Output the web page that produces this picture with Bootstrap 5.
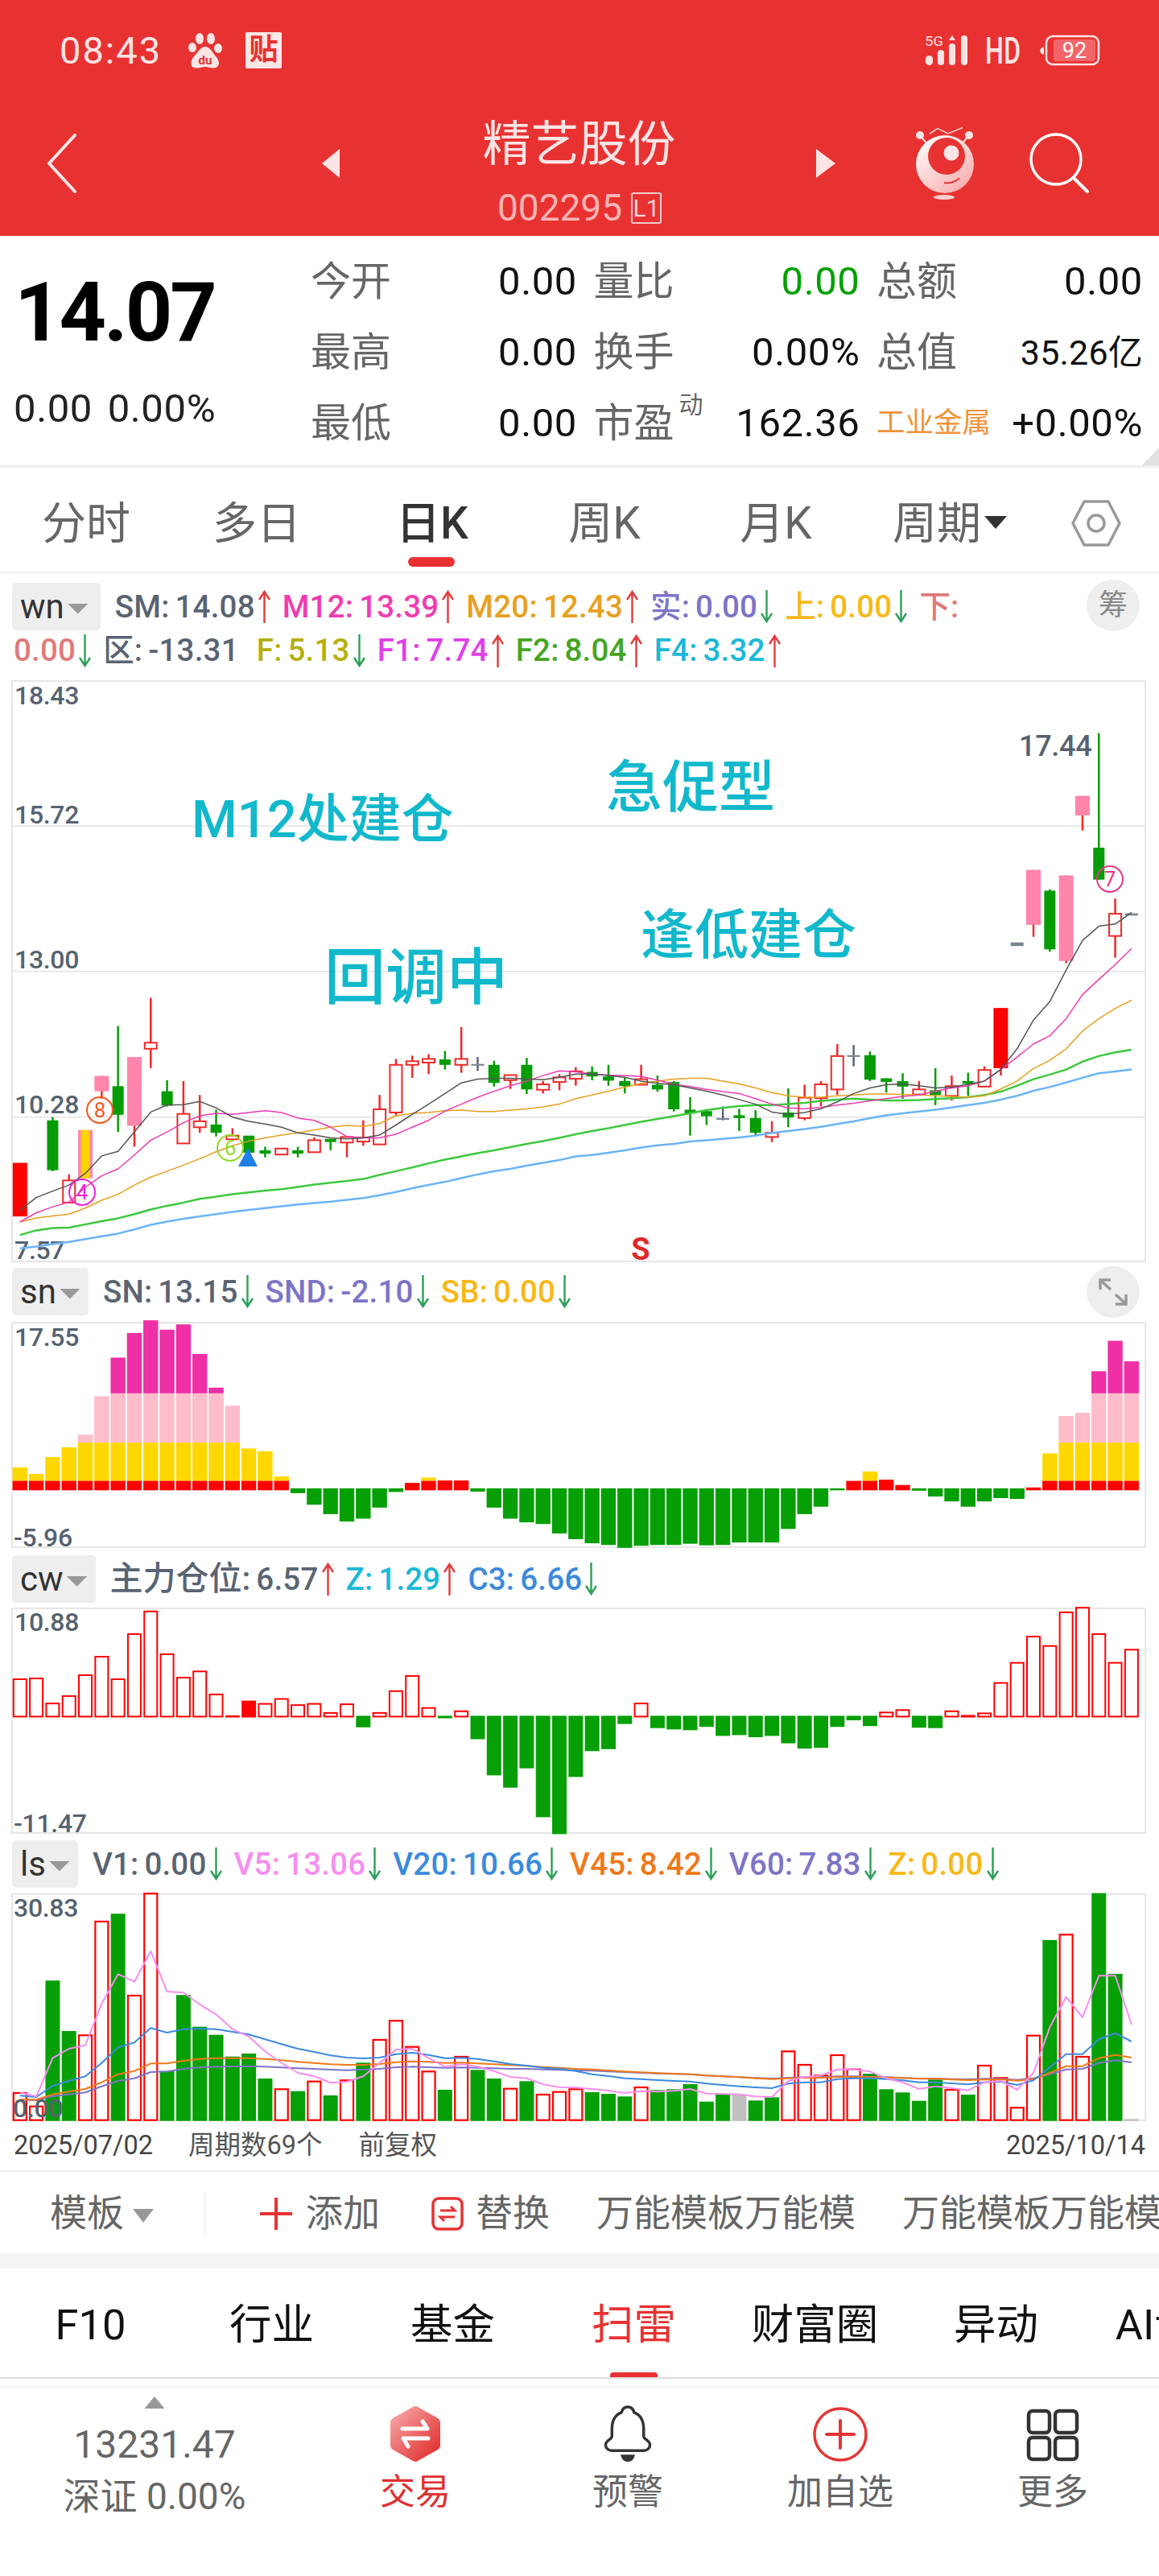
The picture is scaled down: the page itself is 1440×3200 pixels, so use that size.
<!DOCTYPE html>
<html lang="zh-CN">
<head>
    <meta charset="UTF-8">
    <meta name="viewport" content="width=device-width, initial-scale=1.0">
    <title>精艺股份 002295</title>
    <link href="https://cdn.jsdelivr.net/npm/bootstrap@5.3.0/dist/css/bootstrap.min.css" rel="stylesheet">
    <style>
        body { width: 1440px; height: 3200px; overflow: hidden; background: #fff; color: #333;
            font-family: Roboto, "Noto Sans CJK SC", sans-serif; }
        svg { display: block; overflow: visible; }

        /* red header */
        .top-bar { height: 293px; background: #e83232; color: #fde4e4; }
        .status-line { height: 124px; padding: 0 73px 0 74px; }
        .status-time { font-size: 47px; letter-spacing: 2px; margin-right: 32px; line-height: 1; }
        .tie-box { width: 45px; height: 45px; margin-left: 29px; background: #fde6e6; color: #e83232; font-size: 36px;
            font-weight: 700; line-height: 45px; text-align: center; border-radius: 2px; }
        .nav-line { display: grid; grid-template-columns: 400px 22px 592px 24px 100px 72px 230px; height: 169px; align-items: start; }
        .nav-ico { height: 158px; display: flex; align-items: center; }
        .back-cell { padding-left: 58px; }
        .search-ico { margin-left: 70px; }
        .stock-head { padding: 17px 0 0 3px; text-align: center; }
        .stock-name { font-size: 60px; line-height: 78px; }
        .stock-code { font-size: 46px; line-height: 78px; color: #f8b4b4; display: flex; justify-content: center; align-items: center; padding-left: 1px; }
        .level-tag { width: 38px; height: 39px; margin-left: 11px; border: 2px solid #fbcaca; border-radius: 3px; font-size: 30px; line-height: 35px; color: #fbdada; text-align: center; }

        /* quote block */
        .quote-wrap { height: 288px; display: flex; position: relative; border-bottom: 3px solid #eee; }
        .corner-tri { position: absolute; right: 0; bottom: 0; width: 21px; height: 22px; background: #e2e2e2; clip-path: polygon(100% 0, 100% 100%, 0 100%); }
        .price-side { width: 386px; padding: 45px 0 0 17px; }
        .price-big { font-size: 102px; font-weight: 700; line-height: 100px; letter-spacing: -3px; color: #000; padding-left: 1px; }
        .price-chg { font-size: 49px; line-height: 60px; margin-top: 40px; letter-spacing: .6px; word-spacing: 6px; color: #222; white-space: nowrap; }
        .quote-grid { display: grid; grid-template-columns: repeat(3, 331px); column-gap: 20.5px; grid-auto-rows: 88px; padding-top: 13px; }
        .quote-cell { display: flex; justify-content: space-between; align-items: center; font-size: 49px; letter-spacing: .6px; color: #111; position: relative; }
        .quote-lab { font-size: 50px; color: #666; letter-spacing: 0; }
        .quote-lab sup { position: absolute; left: 106px; top: 6px; font-size: 30px; line-height: 1; }
        .quote-sec { font-size: 35.5px; color: #f0933a; letter-spacing: 0; }
        .txt-up-green { color: #00a000; }
        .val-cn { font-size: 43px; letter-spacing: .2px; }

        /* period tabs */
        .period-tabs { display: grid; grid-template-columns: 214px 210px 226px 202px 224px 208px 156px; height: 131px; padding-top: 9px;
            border-bottom: 2px solid #eee; font-size: 55px; color: #666; align-items: center; text-align: center; }
        .period-tab { position: relative; }
        .period-on { color: #333; font-weight: 500; }
        .period-on::after { content: ""; position: absolute; left: 83px; top: 83px; width: 58px; height: 12px; border-radius: 6px; background: #e83232; }
        .caret-dn { display: inline-block; width: 0; height: 0; border: 14px solid transparent; border-top: 16px solid #333; border-bottom: 0; margin-left: 4px; vertical-align: 12px; }

        /* chart panels */
        .panel-head { padding-left: 15px; position: relative; }
        .head-main { height: 133px; padding-top: 12px; }
        .head-first { height: 74px; padding-top: 7px; }
        .head-next { height: 74px; padding-top: 8px; }
        .head-line { display: flex; align-items: center; font-size: 38.5px; font-weight: 500; letter-spacing: .2px; white-space: nowrap; }
        .head-second { height: 50px; margin-left: 2px; }
        .idx-tag { height: 59px; margin-right: 18px; padding-left: 10px; background: #eee; border-radius: 5px; font-size: 42px; font-weight: 400; color: #333;
            letter-spacing: 0; display: flex; align-items: center; }
        .idx-tag i { display: block; width: 26px; height: 13px; margin: 5px 10px 0 4px; background: #999; clip-path: polygon(0 0, 100% 0, 50% 100%); }
        .idx-wide { min-width: 109px; }
        .idx-wide i { margin-right: 15px; }
        .lg-i { display: inline-flex; align-items: center; margin-right: 14px; }
        .lg-i b { font-weight: 500; margin-left: 7px; }
        .lg-wide { margin-right: 22px; }
        .lg-cn { font-size: 41px; letter-spacing: 0; }
        .lg-cn b { font-size: 38.500px; letter-spacing: .2px; }
        .arw { width: 17px; height: 41px; margin-left: 3px; fill: none; stroke-width: 2.4; }
        .arw-up { stroke: #e23b3b; }
        .arw-dn { stroke: #2c9f58; }
        .c-gray { color: #5a6472; } .c-m12 { color: #f03cb0; } .c-m20 { color: #e8a020; } .c-pur { color: #7d74c8; }
        .c-yel { color: #f8b818; } .c-sal { color: #e07a7a; } .c-oli { color: #b5b010; } .c-f1 { color: #e040e8; }
        .c-f2 { color: #45a525; } .c-cya { color: #1ab8d8; } .c-blu { color: #3b8ade; } .c-v5 { color: #f78ef0; } .c-ora { color: #f07818; }
        .round-btn { position: absolute; right: 24px; width: 66px; height: 64px; border-radius: 50%; background: #eee; color: #888;
            font-size: 36px; display: flex; align-items: center; justify-content: center; }
        .btn-top { top: 8px; }
        .btn-sn { top: 5px; }
        .ax { font-size: 32px; font-weight: 500; fill: #566270; letter-spacing: -.3px; }
        .ax-hi { font-size: 36px; }
        .note { fill: #12b8cc; font-weight: 500; }
        .note-a { font-size: 65px; }
        .note-b { font-size: 76px; }
        .note-c { font-size: 70px; }
        .note-d { font-size: 67px; }
        .mk { font-size: 26px; text-anchor: middle; }

        .date-line { height: 61px; padding: 0 17px; font-size: 32.5px; color: #444; display: flex; align-items: center; border-bottom: 2px solid #eee; box-sizing: content-box; }
        .date-line span:nth-child(2) { margin-left: 44px; color: #555; }
        .date-line span:nth-child(3) { margin-left: 45px; color: #555; }

        /* template bar */
        .tpl-bar { height: 101px; display: flex; align-items: center; padding: 2px 0 0 62px; overflow: hidden; white-space: nowrap; font-size: 46px; color: #666; }
        .tpl-caret { width: 26px; height: 17px; margin: 6px 0 0 11px; background: #999; clip-path: polygon(0 0, 100% 0, 50% 100%); flex: none; }
        .tpl-split { width: 2px; height: 54px; margin: 0 67px 0 63px; background: #f0f0f0; flex: none; }
        .tpl-ico { flex: none; }
        .tpl-add { margin-left: 17px; flex: none; }
        .tpl-swap { flex: none; margin: 0 15px 0 64px; }
        .tpl-name { margin-left: 58px; flex: none; }
        .gap-band { height: 19px; background: #f4f4f4; }

        /* info tabs */
        .info-tabs { height: 137px; padding-top: 5px; display: grid; grid-template-columns: repeat(7, 225px); align-items: center; text-align: center; overflow: hidden;
            border-bottom: 2px solid #ddd; font-size: 52.5px; color: #111; white-space: nowrap; }
        .info-on { color: #e83232; position: relative; }
        .info-on::after { content: ""; position: absolute; left: 83px; top: 98px; width: 59px; height: 8px; border-radius: 4px 4px 0 0; background: #e83232; }

        /* bottom nav */
        .foot-nav { margin-top: 9px; border-top: 2px solid #f4f4f4; height: 234px; display: grid; grid-template-columns: 384px repeat(4, 264px); text-align: center; }
        .foot-market { padding-top: 11px; color: #666; }
        .foot-market i { display: block; margin: 0 auto; width: 25px; height: 15px; background: #999; clip-path: polygon(50% 0, 100% 100%, 0 100%); }
        .foot-index { font-size: 48px; line-height: 60px; margin-top: 15px; }
        .foot-chg { font-size: 46px; line-height: 60px; margin-top: 4px; }
        .foot-item { padding-top: 22px; font-size: 44px; color: #666; line-height: 50px; }
        .foot-item svg { margin: 0 auto 12px; }
        .foot-on { color: #e03030; }
    </style>
</head>
<body>
    <svg width="0" height="0" class="position-absolute">
        <symbol id="a-up" viewBox="0 0 17 41"><path d="M8.5 41V2M2 12L8.5 2L15 12"/></symbol>
        <symbol id="a-dn" viewBox="0 0 17 41"><path d="M8.5 0V39M2 29L8.5 39L15 29"/></symbol>
        <linearGradient id="gShield" x1="0" y1="0" x2="1" y2="1"><stop offset="0" stop-color="#f8b0b0"/><stop offset="1" stop-color="#df2222"/></linearGradient>
        <linearGradient id="gHead" x1="0.1" y1="0" x2="0.9" y2="1"><stop offset="0" stop-color="#fff"/><stop offset="1" stop-color="#f8a8a8"/></linearGradient>
    </svg>

    <header class="top-bar">
        <div class="status-line d-flex align-items-center">
            <span class="status-time">08:43</span>
            <svg width="43" height="46" viewBox="0 0 43 46">
                <ellipse cx="6" cy="20" rx="5" ry="6" fill="#fde4e4"/><ellipse cx="15" cy="9" rx="5" ry="7" fill="#fde4e4"/>
                <ellipse cx="29" cy="9" rx="5" ry="7" fill="#fde4e4"/><ellipse cx="38" cy="21" rx="5" ry="6" fill="#fde4e4"/>
                <path d="M22 19C28 19 31 26 35 31C41 37 40 45 33 45.500C28 46 26 44 22 44C18 44 15 46 10 45.500C3 45 3 37 8 31C13 26 16 19 22 19Z" fill="#fde4e4"/>
                <text x="22" y="41" font-size="15" font-weight="700" fill="#e83232" text-anchor="middle">du</text>
            </svg>
            <span class="tie-box">贴</span>
            <svg class="ms-auto" width="218" height="42" viewBox="0 0 218 42">
                <text x="0" y="16" font-size="17" fill="#fde4e4" textLength="23" lengthAdjust="spacingAndGlyphs">5G</text>
                <rect x="1" y="28" width="9" height="12" rx="4.500" fill="#fde4e4"/><rect x="16" y="21" width="8" height="19" rx="4" fill="#fde4e4"/>
                <rect x="30" y="13" width="8" height="27" rx="4" fill="#fde4e4"/><rect x="45" y="3" width="8" height="37" rx="4" fill="#fde4e4"/>
                <path d="M30 9L34 3L38 9Z" fill="#fde4e4"/>
                <text x="75" y="38" font-size="46" font-weight="500" fill="#fde4e4" textLength="44" lengthAdjust="spacingAndGlyphs">HD</text>
                <path d="M148 17C145 18 143 20 143 22C143 24 145 26 148 27Z" fill="#fde4e4"/>
                <rect x="151" y="4" width="65" height="35" rx="8" fill="none" stroke="#fde4e4" stroke-width="2.500"/>
                <rect x="160" y="8" width="52" height="27" rx="3" fill="#f2666a"/>
                <text x="186" y="31" font-size="27" fill="#fff" text-anchor="middle">92</text>
            </svg>
        </div>
        <div class="nav-line">
            <div class="nav-ico back-cell"><svg width="38" height="74" viewBox="0 0 38 74"><path d="M35 2L3 37L35 72" fill="none" stroke="#fde8e8" stroke-width="4" stroke-linecap="round" stroke-linejoin="round"/></svg></div>
            <div class="nav-ico"><svg width="22" height="36" viewBox="0 0 22 36"><path d="M22 0V36L0 18Z" fill="#fde4e4"/></svg></div>
            <div class="stock-head">
                <div class="stock-name">精艺股份</div>
                <div class="stock-code">002295<span class="level-tag">L1</span></div>
            </div>
            <div class="nav-ico"><svg width="24" height="36" viewBox="0 0 24 36"><path d="M0 0V36L24 18Z" fill="#fde4e4"/></svg></div>
            <div></div>
            <div class="nav-ico">
                <svg width="72" height="90" viewBox="0 0 72 90">
                    <path d="M17 8L27 1.500L40 8L58 .5" fill="none" stroke="#fbd0d0" stroke-width="1.500"/>
                    <path d="M5 10L15 22M66 10L56 22" stroke="#fde4e4" stroke-width="2"/>
                    <circle cx="5" cy="10" r="5" fill="#fde4e4"/><circle cx="66" cy="10" r="5" fill="#fde4e4"/>
                    <circle cx="36" cy="46" r="36" fill="url(#gHead)"/>
                    <circle cx="38" cy="36" r="23" fill="#e83232"/>
                    <circle cx="44" cy="32" r="9.500" fill="#fde4e4"/>
                    <path d="M35 69C42 70 50 68 54 63" fill="none" stroke="#e83232" stroke-width="2"/>
                    <ellipse cx="35" cy="87" rx="13" ry="3" fill="#fbd0d0"/>
                </svg>
            </div>
            <div class="nav-ico">
                <svg class="search-ico" width="74" height="74" viewBox="0 0 74 74"><circle cx="32" cy="32" r="31" fill="none" stroke="#fff" stroke-width="3.500"/><path d="M54 55L71 72" stroke="#fff" stroke-width="4" stroke-linecap="round"/></svg>
            </div>
        </div>
    </header>

    <section class="quote-wrap">
        <div class="price-side">
            <div class="price-big">14.07</div>
            <div class="price-chg">0.00 0.00%</div>
        </div>
        <div class="quote-grid">
            <div class="quote-cell"><span class="quote-lab">今开</span><span>0.00</span></div>
            <div class="quote-cell"><span class="quote-lab">量比</span><span class="txt-up-green">0.00</span></div>
            <div class="quote-cell"><span class="quote-lab">总额</span><span>0.00</span></div>
            <div class="quote-cell"><span class="quote-lab">最高</span><span>0.00</span></div>
            <div class="quote-cell"><span class="quote-lab">换手</span><span>0.00%</span></div>
            <div class="quote-cell"><span class="quote-lab">总值</span><span class="val-cn">35.26亿</span></div>
            <div class="quote-cell"><span class="quote-lab">最低</span><span>0.00</span></div>
            <div class="quote-cell"><span class="quote-lab">市盈<sup>动</sup></span><span>162.36</span></div>
            <div class="quote-cell"><span class="quote-sec">工业金属</span><span>+0.00%</span></div>
        </div>
        <div class="corner-tri"></div>
    </section>

    <nav class="period-tabs">
        <div class="period-tab">分时</div>
        <div class="period-tab">多日</div>
        <div class="period-tab period-on">日K</div>
        <div class="period-tab">周K</div>
        <div class="period-tab">月K</div>
        <div class="period-tab">周期<span class="caret-dn"></span></div>
        <div class="period-tab">
            <svg class="mx-auto" width="62" height="58" viewBox="0 0 62 58"><path d="M16 2H46L60 29L46 56H16L2 29Z" fill="none" stroke="#999" stroke-width="3.500" stroke-linejoin="round"/><circle cx="31" cy="29" r="10" fill="none" stroke="#999" stroke-width="3.500"/></svg>
        </div>
    </nav>

    <section>
        <div class="panel-head head-main">
            <div class="head-line">
                <span class="idx-tag idx-wide">wn<i></i></span>
                <span class="lg-i c-gray">SM:<b>14.08</b><svg class="arw arw-up"><use href="#a-up"/></svg></span>
                <span class="lg-i c-m12">M12:<b>13.39</b><svg class="arw arw-up"><use href="#a-up"/></svg></span>
                <span class="lg-i c-m20">M20:<b>12.43</b><svg class="arw arw-up"><use href="#a-up"/></svg></span>
                <span class="lg-i c-pur">实:<b>0.00</b><svg class="arw arw-dn"><use href="#a-dn"/></svg></span>
                <span class="lg-i c-yel">上:<b>0.00</b><svg class="arw arw-dn"><use href="#a-dn"/></svg></span>
                <span class="lg-i c-sal">下:</span>
            </div>
            <div class="round-btn btn-top">筹</div>
            <div class="head-line head-second">
                <span class="lg-i c-sal">0.00<svg class="arw arw-dn"><use href="#a-dn"/></svg></span>
                <span class="lg-i lg-wide c-gray">区:<b>-13.31</b></span>
                <span class="lg-i c-oli">F:<b>5.13</b><svg class="arw arw-dn"><use href="#a-dn"/></svg></span>
                <span class="lg-i c-f1">F1:<b>7.74</b><svg class="arw arw-up"><use href="#a-up"/></svg></span>
                <span class="lg-i c-f2">F2:<b>8.04</b><svg class="arw arw-up"><use href="#a-up"/></svg></span>
                <span class="lg-i c-cya">F4:<b>3.32</b><svg class="arw arw-up"><use href="#a-up"/></svg></span>
            </div>
        </div>
        <svg id="chartMain" width="1440" height="723"></svg>

        <div class="panel-head head-first">
            <div class="head-line">
                <span class="idx-tag">sn<i></i></span>
                <span class="lg-i c-gray">SN:<b>13.15</b><svg class="arw arw-dn"><use href="#a-dn"/></svg></span>
                <span class="lg-i c-pur">SND:<b>-2.10</b><svg class="arw arw-dn"><use href="#a-dn"/></svg></span>
                <span class="lg-i c-yel">SB:<b>0.00</b><svg class="arw arw-dn"><use href="#a-dn"/></svg></span>
            </div>
            <div class="round-btn btn-sn">
                <svg width="36" height="34" viewBox="0 0 36 34"><path d="M15 2H2V14M2 2L15 14M21 32H34V20M34 32L21 20" fill="none" stroke="#999" stroke-width="3.500"/></svg>
            </div>
        </div>
        <svg id="chartSn" width="1440" height="281"></svg>

        <div class="panel-head head-next">
            <div class="head-line">
                <span class="idx-tag">cw<i></i></span>
                <span class="lg-i lg-cn c-gray">主力仓位:<b>6.57</b><svg class="arw arw-up"><use href="#a-up"/></svg></span>
                <span class="lg-i c-cya">Z:<b>1.29</b><svg class="arw arw-up"><use href="#a-up"/></svg></span>
                <span class="lg-i c-blu">C3:<b>6.66</b><svg class="arw arw-dn"><use href="#a-dn"/></svg></span>
            </div>
        </div>
        <svg id="chartCw" width="1440" height="281"></svg>

        <div class="panel-head head-next">
            <div class="head-line">
                <span class="idx-tag">ls<i></i></span>
                <span class="lg-i c-gray">V1:<b>0.00</b><svg class="arw arw-dn"><use href="#a-dn"/></svg></span>
                <span class="lg-i c-v5">V5:<b>13.06</b><svg class="arw arw-dn"><use href="#a-dn"/></svg></span>
                <span class="lg-i c-blu">V20:<b>10.66</b><svg class="arw arw-dn"><use href="#a-dn"/></svg></span>
                <span class="lg-i c-ora">V45:<b>8.42</b><svg class="arw arw-dn"><use href="#a-dn"/></svg></span>
                <span class="lg-i c-pur">V60:<b>7.83</b><svg class="arw arw-dn"><use href="#a-dn"/></svg></span>
                <span class="lg-i c-yel">Z:<b>0.00</b><svg class="arw arw-dn"><use href="#a-dn"/></svg></span>
            </div>
        </div>
        <svg id="chartLs" width="1440" height="283"></svg>

        <div class="date-line">
            <span>2025/07/02</span><span>周期数69个</span><span>前复权</span><span class="ms-auto">2025/10/14</span>
        </div>
    </section>

    <div class="tpl-bar">
        <span>模板</span><span class="tpl-caret"></span><span class="tpl-split"></span>
        <svg class="tpl-ico" width="40" height="42" viewBox="0 0 40 42"><path d="M20 1V41M0 21H40" stroke="#e83232" stroke-width="4"/></svg>
        <span class="tpl-add">添加</span>
        <svg class="tpl-swap" width="40" height="42" viewBox="0 0 40 42"><rect x="2" y="2" width="36" height="38" rx="7" fill="none" stroke="#e83232" stroke-width="3.500"/><path d="M11 17H29L24 12M29 25H11L16 30" fill="none" stroke="#e83232" stroke-width="3"/></svg>
        <span>替换</span>
        <span class="tpl-name">万能模板万能模</span>
        <span class="tpl-name">万能模板万能模</span>
    </div>
    <div class="gap-band"></div>

    <nav class="info-tabs">
        <div>F10</div><div>行业</div><div>基金</div><div class="info-on">扫雷</div><div>财富圈</div><div>异动</div><div>AI诊股</div>
    </nav>

    <footer class="foot-nav">
        <div class="foot-market">
            <i></i>
            <div class="foot-index">13231.47</div>
            <div class="foot-chg">深证 0.00%</div>
        </div>
        <div class="foot-item foot-on">
            <svg width="64" height="71" viewBox="0 0 64 71"><path d="M29 2Q32 0 35 2L60 16Q63 18 63 21V50Q63 53 60 55L35 69Q32 71 29 69L4 55Q1 53 1 50V21Q1 18 4 16Z" fill="url(#gShield)"/><path d="M16 29H47L41 20M48 41H17L23 51" fill="none" stroke="#fff" stroke-width="5" stroke-linecap="round" stroke-linejoin="round"/></svg>
            交易
        </div>
        <div class="foot-item">
            <svg width="60" height="71" viewBox="0 0 60 72"><path d="M30 2C25 2 23 5 22 9C14 12 10 20 10 30V39C10 43 2 44 2 50C2 54 6 57 10 57H50C54 57 58 54 58 50C58 44 50 43 50 39V30C50 20 46 12 38 9C37 5 35 2 30 2Z" fill="none" stroke="#333" stroke-width="3.500"/><path d="M21 62H39C38 68 34 71 30 71C26 71 22 68 21 62Z" fill="#333"/></svg>
            预警
        </div>
        <div class="foot-item">
            <svg width="70" height="71" viewBox="0 0 70 71"><circle cx="35" cy="36" r="32" fill="none" stroke="#e53535" stroke-width="3.500"/><path d="M35 19V53M18 36H52" stroke="#e53535" stroke-width="4" stroke-linecap="round"/></svg>
            加自选
        </div>
        <div class="foot-item">
            <svg width="66" height="71" viewBox="0 0 66 71"><g fill="none" stroke="#333" stroke-width="4.500"><rect x="3" y="7" width="26" height="27" rx="5"/><rect x="36" y="7" width="27" height="27" rx="5"/><rect x="3" y="40" width="26" height="27" rx="5"/><rect x="36" y="40" width="27" height="27" rx="5"/></g></svg>
            更多
        </div>
    </footer>

    <script>
        // candle slot centres, in page px
        const cx = i => 24.8 + 20.31 * i;
        const RED = '#ff0000', LINE_RED = '#ee2a2a', GREEN = '#069c06', PINK = '#ff85ab';
        const rect = (x, y, w, h, fill, extra = '') => `<rect x="${x}" y="${y}" width="${w}" height="${Math.max(h, 1)}" fill="${fill}" ${extra}/>`;
        const poly = (pts, stroke, w) => `<polyline points="${pts.join(' ')}" fill="none" stroke="${stroke}" stroke-width="${w}" stroke-linejoin="round"/>`;
        const frame = h => `<rect x="15" y="1" width="1408" height="${h}" fill="none" stroke="#e6e6e6" stroke-width="2"/>`;
        const label = (x, y, t) => `<text class="ax" x="${x}" y="${y}">${t}</text>`;

        // main k-line chart. values were read off the picture, y scale 1.742
        const mainY = z => +(z / 1.742 - 145).toFixed(1);
        const candles = [
            ['R',1297,1413],null,['g',1205,1313,1198,1315],['r',1335,1383,1322,1383],['y',1226,1330],['p',1109,1142,1109,1158],
            ['g',1131,1193,1001,1230],['p',1068,1217,1068,1262],['r',1037,1050,940,1092],['g',1142,1173,1118,1175],['r',1191,1255,1120,1255],
            ['r',1207,1220,1150,1232],['g',1214,1232,1182,1240],['r',1238,1246,1222,1250],['g',1238,1275,1238,1275],['g',1270,1277,1262,1285],
            ['r',1266,1279,1266,1279],['g',1270,1277,1262,1285],['r',1248,1274,1242,1274],['g',1245,1252,1245,1270],['r',1241,1253,1241,1285],
            ['r',1242,1251,1205,1260],['r',1181,1257,1150,1258],['r',1085,1188,1072,1195],['r',1077,1085,1065,1113],['r',1072,1080,1062,1105],
            ['g',1073,1085,1055,1095],['r',1072,1085,1003,1102],['d',1083,1085,1068,1098],['g',1085,1124,1076,1132],['r',1107,1118,1107,1137],
            ['g',1085,1138,1070,1148],['r',1127,1139,1120,1147],['r',1112,1122,1105,1140],['r',1099,1115,1090,1130],['g',1100,1110,1088,1118],
            ['g',1110,1119,1085,1130],['g',1120,1131,1112,1147],['r',1116,1128,1085,1128],['g',1128,1138,1108,1143],['g',1122,1181,1120,1186],
            ['g',1182,1190,1155,1238],['g',1185,1196,1185,1215],['d',1200,1202,1175,1205],['g',1194,1200,1180,1228],['g',1200,1232,1183,1240],
            ['r',1232,1241,1207,1252],['g',1188,1199,1136,1220],['r',1156,1200,1128,1205],['r',1127,1157,1120,1175],['r',1066,1138,1040,1150],
            ['d',1064,1066,1042,1088],['g',1064,1117,1056,1120],['g',1114,1122,1114,1145],['g',1120,1132,1103,1158],['r',1138,1149,1120,1150],
            ['g',1140,1150,1092,1172],['r',1131,1152,1108,1162],['g',1120,1126,1102,1152],['r',1096,1132,1088,1133],['R',962,1092,962,1108],
            ['d',820,826,820,826],['p',663,782,663,808],['g',708,835,705,840],['p',675,860,675,865],['p',503,545,503,578],['g',615,684,367,684],
            ['r',758,806,725,853],['d',757,760,757,760]
        ];
        const maLines = [
            ['#6ab4f8', 2.5, [1482,1478,1473,1468,1462,1456,1450,1441,1431,1424,1418,1413,1408,1403,1399,1395,1391,1387,1384,1381,1377,1373,1367,1360,1352,1345,1338,1330,1322,1315,1310,1303,1297,1291,1283,1280,1275,1270,1264,1259,1256,1251,1248,1245,1242,1238,1232,1228,1224,1219,1213,1207,1200,1194,1190,1186,1182,1177,1172,1167,1160,1152,1141,1133,1123,1113,1103,1099,1095]],
            ['#3ec83e', 2.5, [1453,1443,1438,1437,1430,1423,1417,1408,1398,1390,1383,1375,1370,1365,1361,1357,1354,1349,1344,1340,1336,1332,1323,1315,1307,1298,1290,1283,1276,1270,1263,1256,1250,1243,1235,1228,1222,1215,1208,1202,1196,1190,1183,1178,1174,1172,1172,1170,1167,1163,1160,1158,1160,1162,1162,1161,1159,1157,1155,1150,1143,1130,1116,1106,1095,1078,1066,1058,1052]],
            ['#e8a020', 1.5, [1425,1416,1412,1408,1395,1378,1365,1345,1328,1315,1302,1288,1273,1260,1250,1243,1237,1232,1226,1220,1216,1218,1212,1195,1190,1188,1184,1183,1186,1186,1183,1180,1176,1170,1158,1150,1142,1133,1125,1120,1116,1114,1114,1120,1126,1135,1145,1152,1155,1155,1152,1150,1148,1148,1149,1150,1152,1153,1155,1152,1137,1120,1093,1075,1050,1012,985,963,945]],
            ['#ee3ab0', 1.5, [1425,1405,1392,1382,1350,1325,1310,1280,1248,1230,1210,1195,1190,1192,1188,1184,1188,1200,1205,1220,1240,1243,1243,1235,1220,1205,1185,1170,1155,1142,1130,1120,1108,1098,1100,1105,1107,1108,1110,1118,1127,1132,1138,1143,1147,1158,1170,1178,1180,1177,1172,1168,1163,1158,1153,1150,1142,1135,1130,1120,1095,1068,1040,1022,985,933,900,868,833]],
            ['#555555', 1.5, [1400,1372,1358,1345,1320,1282,1272,1230,1187,1172,1171,1164,1178,1198,1207,1213,1220,1232,1237,1243,1245,1243,1237,1215,1192,1170,1147,1124,1116,1114,1114,1116,1117,1112,1105,1105,1108,1112,1120,1125,1128,1135,1142,1150,1160,1170,1187,1192,1188,1180,1165,1147,1135,1128,1126,1130,1135,1133,1127,1120,1095,1050,988,948,880,816,785,780,755]]
        ];
        let h = frame(721);
        [1025.5, 1206, 1387].forEach(y => h += rect(15, y - 845, 1408, 1.5, '#e4e4e4'));
        h += label(18, 30, '18.43') + label(18, 178, '15.72') + label(18, 358, '13.00') + label(18, 538, '10.28') + label(18, 719, '7.57');
        candles.forEach((c, i) => {
            if (!c) return;
            const [t, a, b, w1 = a, w2 = b] = c, x = cx(i), top = mainY(a), bot = mainY(b);
            const wickCol = t === 'g' ? GREEN : t === 'd' ? '#5a6472' : LINE_RED;
            if (w1 < a || w2 > b) h += rect(x - 1.25, mainY(w1), 2.5, mainY(w2) - mainY(w1), wickCol);
            if (t === 'R') h += rect(x - 9, top, 18, bot - top, RED);
            if (t === 'p') h += rect(x - 9, top, 18, bot - top, PINK);
            if (t === 'g') h += rect(x - 7, top, 14, bot - top, GREEN);
            if (t === 'd') h += rect(x - 8, top, 16, bot - top + 1, '#7b8492');
            if (t === 'r') h += rect(x - 7.5, top, 15, bot - top, '#fff', `stroke="${LINE_RED}" stroke-width="2"`);
            if (t === 'y') h += rect(x - 9, top, 18, bot - top, PINK) + rect(x - 5.5, top, 11, bot - top, '#ffd400');
        });
        maLines.forEach(([col, w, vals]) => h += poly(vals.map((v, i) => `${cx(i).toFixed(1)},${mainY(v)}`), col, w));
        h += `<path d="M308 581L296 604H320Z" fill="#1e7fe8"/>`;
        [[102, 636, '4', '#ee22d8'], [124, 534, '8', '#f0561e'], [286, 581, '6', '#8fdc28'], [1379, 247, '7', '#e8358a']].forEach(([x, y, t, col]) => {
            h += `<circle cx="${x}" cy="${y}" r="16" fill="none" stroke="${col}" stroke-width="2"/><text class="mk" x="${x}" y="${y + 9}" fill="${col}">${t}</text>`;
        });
        h += `<text class="ax ax-hi" x="1266" y="94">17.44</text>`;
        h += `<text class="note note-a" x="238" y="195">M12处建仓</text>`;
        h += `<text class="note note-b" x="403" y="396">回调中</text>`;
        h += `<text class="note note-c" x="753" y="158">急促型</text>`;
        h += `<text class="note note-d" x="796" y="340">逢低建仓</text>`;
        h += `<text x="796" y="720" font-size="38" font-weight="700" fill="#df2a2a" text-anchor="middle">S</text>`;
        document.getElementById('chartMain').innerHTML = h;

        // sn: stacked histogram, numbers are green bars, arrays are [red, yellow, pink, magenta] tops
        const snY = z => +(z / 1.96 - 82).toFixed(1);
        const sn = [
            [548,515],[548,531],[548,490],[548,466],[548,455,436],[548,455,342],[548,455,335,248],[548,455,335,188],[548,455,335,157],
            [548,455,335,180],[548,455,335,167],[548,455,335,239],[548,455,335,321],[548,455,365],[548,469],[548,476],[548,537],
            578,606,629,647,640,613,575,[553],[548,540],[547],[547],574,613,640,649,653,676,690,700,704,711,706,704,704,701,705,704,698,698,698,
            665,629,611,571,[548],[548,525],[545],[558],572,586,598,611,598,590,592,[564],[548,481],[548,455,390],[548,455,382],
            [548,455,335,281],[548,455,335,207],[548,455,335,257]
        ];
        h = frame(279) + label(18, 30, '17.55') + label(17, 279, '-5.96');
        sn.forEach((v, i) => {
            const x = cx(i) - 9.2, bar = (a, b, col) => rect(x, snY(a), 18.4, snY(b) - snY(a), col);
            if (typeof v === 'number') { h += bar(566, v, '#069f06'); return; }
            const [r, y, p, m] = v;
            if (m) h += bar(m, 335, '#ee2fa5');
            if (p) h += bar(p, 455, '#ffbccb');
            if (y) h += bar(y, 548, '#ffd700');
            h += bar(r, 571, RED);
        });
        document.getElementById('chartSn').innerHTML = h;

        // cw: above the zero line hollow red, below it solid green, negative value means solid red
        const cwY = z => +(z / 1.96 - 437).toFixed(1);
        const cw = [1031,1029,1090,1072,1021,976,1031,921,866,970,1027,1012,1068,-1119,-1083,1091,1079,1094,1091,1113,1092,1148,1113,1060,1023,1101,1126,1109,
            1177,1265,1295,1248,1367,1408,1269,1206,1201,1140,1090,1150,1153,1155,1147,1169,1167,1172,1169,1187,1200,1198,1147,1131,1145,1112,1106,1149,1150,1109,-1118,1114,
            1040,991,927,950,868,857,921,991,959];
        h = frame(279) + label(18, 29, '10.88') + label(17, 279, '-11.47');
        cw.forEach((v, i) => {
            const x = cx(i);
            if (v < 0) h += rect(x - 9, cwY(-v), 18, cwY(1124) - cwY(-v), RED);
            else if (v > 1122) h += rect(x - 9, cwY(1120), 18, cwY(v) - cwY(1120), '#069f06');
            else h += rect(x - 8, cwY(v), 16, cwY(1122) - cwY(v), '#fff', `stroke="${RED}" stroke-width="2"`);
        });
        document.getElementById('chartCw').innerHTML = h;

        // ls: volume bars plus the four average lines
        const lsY = z => +(z / 3 - 72).toFixed(1);
        const lsKinds = 'hhgghhghhg' + 'gggggghghg' + 'hghhhhghgg' + 'hghhhggghg' + 'ggggngghhh' + 'hhggggghgh' + 'hhhghhggn';
        const lsTop = [960,1010,541,729,745,321,292,597,217,878,595,713,743,824,813,906,946,953,917,969,913,847,762,691,788,880,948,825,874,906,944,916,966,956,946,
            957,963,973,939,949,946,927,992,965,965,988,976,805,855,895,819,872,888,946,958,989,910,948,966,858,904,1015,746,390,370,825,215,516,1057];
        const lsLines = [
            ['#7d74c8', [985,987,972,965,958,935,915,905,882,880,870,865,862,861,860,862,865,868,870,873,875,873,870,864,862,864,866,865,866,868,870,870,872,874,876,877,880,882,885,887,889,890,895,898,901,904,906,903,901,901,898,898,899,901,904,906,906,908,909,907,907,911,905,890,872,870,848,838,846]],
            ['#f07818', [985,985,965,955,945,920,890,878,850,850,840,833,830,830,830,833,838,844,848,853,855,855,852,845,842,844,848,847,850,853,856,859,863,866,870,872,876,880,883,886,888,890,895,898,901,905,908,905,903,903,900,900,900,902,904,907,907,910,912,910,909,914,908,885,860,860,830,818,828]],
            ['#3b8ade', [970,975,933,915,898,848,790,772,718,735,722,720,722,732,742,760,778,795,807,820,828,831,828,815,810,818,830,829,833,842,852,858,866,870,878,890,897,905,908,912,915,917,925,930,935,939,942,925,920,920,908,905,905,908,913,920,920,924,928,920,918,930,913,865,815,815,760,737,768]],
            ['#f78ef0', [958,973,830,795,782,628,517,545,432,582,586,630,667,722,750,805,848,885,897,922,918,898,848,798,795,830,862,853,862,878,900,905,928,938,940,945,951,960,953,955,952,945,962,963,965,973,975,915,900,895,872,872,880,905,920,945,935,942,950,920,915,948,885,715,602,678,523,523,705]]
        ];
        h = frame(281) + label(17, 29, '30.83');
        lsTop.forEach((v, i) => {
            const x = cx(i), k = lsKinds[i], base = lsY(1064);
            if (k === 'h') h += rect(x - 8, lsY(v), 16, lsY(1061) - lsY(v), '#fff', `stroke="${RED}" stroke-width="2.2"`);
            else h += rect(x - 9, lsY(v), 18, base - lsY(v), k === 'g' ? '#069f06' : '#c0c0c0');
        });
        lsLines.forEach(([col, vals]) => h += poly(vals.map((v, i) => `${cx(i).toFixed(1)},${lsY(v)}`), col, 2));
        h += label(16, 278, '0.00');
        document.getElementById('chartLs').innerHTML = h;
    </script>
    <script src="https://cdn.jsdelivr.net/npm/bootstrap@5.3.0/dist/js/bootstrap.bundle.min.js"></script>
</body>
</html>
